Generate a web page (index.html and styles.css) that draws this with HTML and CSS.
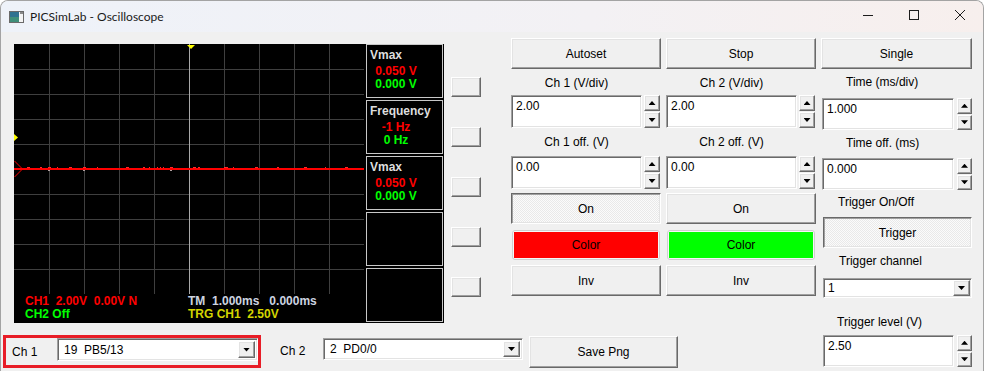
FILE: index.html
```html
<!DOCTYPE html>
<html lang="en">
<head>
    <meta charset="UTF-8">
    <title>PICSimLab - Oscilloscope</title>
    <link rel="stylesheet" href="styles.css">
</head>
<body>
<div class="window">
    <div class="titlebar">
        <svg class="app-icon" width="15" height="12" viewBox="0 0 15 12">
            <rect x="0.5" y="0.5" width="14" height="11" fill="#f4f4f4" stroke="#6a6a6a"/>
            <rect x="1" y="1" width="9" height="10" fill="#2f7290"/>
            <rect x="1" y="6" width="9" height="5" fill="#3f8f7a"/>
            <rect x="11" y="1" width="3" height="2" fill="#8a8a8a"/>
        </svg>
        <span class="title">PICSimLab - Oscilloscope</span>
        <div class="caption">
            <span class="cap"><svg width="10" height="10"><path d="M0 5.5H10" stroke="#1c1c1c"/></svg></span>
            <span class="cap"><svg width="10" height="10"><rect x="0.5" y="0.5" width="9" height="9" fill="none" stroke="#1c1c1c"/></svg></span>
            <span class="cap"><svg width="10" height="10"><path d="M0 0L10 10M10 0L0 10" stroke="#1c1c1c"/></svg></span>
        </div>
    </div>

    <div class="content">
        <div class="left">
            <div class="top">
                <div class="scope">
                    <div class="screen">
                        <svg class="grid" width="350" height="250" viewBox="0 0 350 250">
                            <path d="M35.5 0V250M70.5 0V250M105.5 0V250M140.5 0V250M210.5 0V250M245.5 0V250M280.5 0V250M315.5 0V250" stroke="#3f3f3f"/>
                            <path d="M0 25.5H350M0 50.5H350M0 75.5H350M0 100.5H350M0 150.5H350M0 175.5H350M0 200.5H350M0 225.5H350" stroke="#3f3f3f"/>
                            <path d="M175.5 0V250" stroke="#a8a8a8"/>
                            <rect x="0" y="124" width="350" height="2" fill="#ff0000"/>
                            <g fill="#ff2a2a">
                                <rect x="13" y="123" width="3" height="1"/>
                                <rect x="26" y="123" width="2" height="1"/>
                                <rect x="34" y="123" width="3" height="1"/>
                                <rect x="43" y="123" width="1" height="1"/>
                                <rect x="55" y="123" width="3" height="1"/>
                                <rect x="69" y="123" width="3" height="1"/>
                                <rect x="83" y="123" width="1" height="1"/>
                                <rect x="112" y="123" width="3" height="1"/>
                                <rect x="129" y="123" width="2" height="1"/>
                                <rect x="135" y="123" width="1" height="1"/>
                                <rect x="143" y="123" width="1" height="1"/>
                                <rect x="146" y="123" width="1" height="1"/>
                                <rect x="149" y="123" width="1" height="1"/>
                                <rect x="156" y="123" width="3" height="1"/>
                                <rect x="179" y="123" width="3" height="1"/>
                                <rect x="184" y="123" width="2" height="1"/>
                                <rect x="210" y="123" width="4" height="1"/>
                                <rect x="219" y="123" width="1" height="1"/>
                                <rect x="241" y="123" width="3" height="1"/>
                                <rect x="263" y="123" width="2" height="1"/>
                                <rect x="290" y="123" width="3" height="1"/>
                                <rect x="311" y="123" width="1" height="1"/>
                                <rect x="331" y="123" width="3" height="1"/>
                            </g>
                            <g fill="#b0a0a0">
                                <rect x="34" y="126" width="2" height="1"/>
                                <rect x="69" y="126" width="2" height="1"/>
                                <rect x="156" y="126" width="2" height="1"/>
                            </g>
                            <polygon points="173,1 181,1 177,5" fill="#ffff00"/>
                            <polygon points="0,90 4,93.5 0,97" fill="#ffff00"/>
                            <polyline points="0.5,117 8.5,125 0.5,133" fill="none" stroke="#ff0000"/>
                        </svg>
                        <div class="readout">
                            <div class="rcol first">
                                <div class="rline red">CH1  2.00V  0.00V N</div>
                                <div class="rline green">CH2 Off</div>
                            </div>
                            <div class="rcol">
                                <div class="rline grey">TM  1.000ms   0.000ms</div>
                                <div class="rline yellow">TRG CH1  2.50V</div>
                            </div>
                        </div>
                    </div>
                    <div class="meas">
                        <div class="mbox">
                            <div class="mname">Vmax</div>
                            <div class="vals"><div class="red">0.050 V</div><div class="green">0.000 V</div></div>
                        </div>
                        <div class="mbox">
                            <div class="mname">Frequency</div>
                            <div class="vals"><div class="red">-1 Hz</div><div class="green">0 Hz</div></div>
                        </div>
                        <div class="mbox">
                            <div class="mname">Vmax</div>
                            <div class="vals"><div class="red">0.050 V</div><div class="green">0.000 V</div></div>
                        </div>
                        <div class="mbox"></div>
                        <div class="mbox"></div>
                    </div>
                </div>

                <div class="sidebtns">
                    <button class="btn"></button>
                    <button class="btn"></button>
                    <button class="btn"></button>
                    <button class="btn"></button>
                    <button class="btn"></button>
                </div>

                <div class="chcol">
                    <button class="btn big">Autoset</button>
                    <div class="lbl lbl-a">Ch 1 (V/div)</div>
                    <div class="field-row">
                        <div class="field">2.00</div>
                        <div class="spin"><button class="sb up"></button><button class="sb dn"></button></div>
                    </div>
                    <div class="lbl lbl-b">Ch 1 off. (V)</div>
                    <div class="field-row">
                        <div class="field">0.00</div>
                        <div class="spin"><button class="sb up"></button><button class="sb dn"></button></div>
                    </div>
                    <button class="btn big down on">On</button>
                    <button class="colorbtn"><span class="swatch red-bg">Color</span></button>
                    <button class="btn big inv">Inv</button>
                </div>

                <div class="chcol">
                    <button class="btn big">Stop</button>
                    <div class="lbl lbl-a">Ch 2 (V/div)</div>
                    <div class="field-row">
                        <div class="field">2.00</div>
                        <div class="spin"><button class="sb up"></button><button class="sb dn"></button></div>
                    </div>
                    <div class="lbl lbl-b">Ch 2 off. (V)</div>
                    <div class="field-row">
                        <div class="field">0.00</div>
                        <div class="spin"><button class="sb up"></button><button class="sb dn"></button></div>
                    </div>
                    <button class="btn big on">On</button>
                    <button class="colorbtn"><span class="swatch green-bg">Color</span></button>
                    <button class="btn big inv">Inv</button>
                </div>
            </div>

            <div class="bottom">
                <div class="chsel">
                    <span class="chname">Ch 1</span>
                    <div class="combo wide"><span class="ctext">19  PB5/13</span><span class="drop"></span></div>
                </div>
                <span class="chname ch2">Ch 2</span>
                <div class="combo ch2sel"><span class="ctext">2  PD0/0</span><span class="drop"></span></div>
                <button class="btn save">Save Png</button>
            </div>
        </div>

        <div class="tcol">
            <button class="btn big">Single</button>
            <div class="tl tl1">Time (ms/div)</div>
            <div class="field-row trow">
                <div class="field">1.000</div>
                <div class="spin"><button class="sb up"></button><button class="sb dn"></button></div>
            </div>
            <div class="tl tl2">Time off. (ms)</div>
            <div class="field-row trow">
                <div class="field">0.000</div>
                <div class="spin"><button class="sb up"></button><button class="sb dn"></button></div>
            </div>
            <div class="tl tl3">Trigger On/Off</div>
            <button class="btn big down trig">Trigger</button>
            <div class="tl tl4">Trigger channel</div>
            <div class="combo tsel"><span class="ctext">1</span><span class="drop"></span></div>
            <div class="tl tl5">Trigger level (V)</div>
            <div class="field-row trow lvl">
                <div class="field">2.50</div>
                <div class="spin"><button class="sb up"></button><button class="sb dn"></button></div>
            </div>
        </div>
    </div>
</div>
</body>
</html>
```

FILE: styles.css
```css
* {
    box-sizing: border-box;
}
body {
    margin: 0;
    background: #ffffff;
    font-family: "Liberation Sans", Arial, sans-serif;
    font-size: 12px;
    color: #000;
    overflow: hidden;
}
.window {
    width: 984px;
    height: 371px;
    border: 1px solid #a3a3a3;
    border-bottom: 0;
    border-radius: 8px 8px 0 0;
    background: #f0f0f0;
    overflow: hidden;
}

/* title bar */
.titlebar {
    height: 31px;
    display: flex;
    align-items: center;
    background: linear-gradient(90deg, #eef2f9, #f3f1f4 60%, #f7efed);
}
.app-icon {
    margin-left: 8px;
    flex: none;
}
.title {
    margin-left: 6px;
    font-family: Lato, "Liberation Sans", sans-serif;
    font-size: 12px;
    color: #1a1a1a;
}
.caption {
    margin-left: auto;
    display: flex;
    height: 31px;
}
.cap {
    width: 46px;
    display: flex;
    justify-content: center;
    padding-top: 9px;
}

/* layout */
.content {
    display: flex;
    padding: 6px 0 0 2px;
}
.left {
    width: 813px;
}
.top {
    display: flex;
    align-items: flex-start;
    height: 297px;
}

/* scope */
.scope {
    margin: 6px 0 0 11px;
    width: 430px;
    height: 279px;
    background: #000;
    display: flex;
}
.screen {
    width: 350px;
    margin-right: 2px;
}
.grid {
    display: block;
}
.readout {
    display: flex;
    font-weight: bold;
    line-height: 13px;
    padding-top: 1px;
}
.rline {
    white-space: pre;
}
.rcol.first {
    width: 174px;
    padding-left: 11px;
}
.red { color: #ff0000; }
.green { color: #00ff00; }
.grey { color: #cdd4e0; }
.yellow { color: #d4d400; }
.meas {
    width: 77px;
    display: flex;
    flex-direction: column;
    gap: 2px;
}
.mbox {
    height: 54px;
    border: 1px solid #c8c8c8;
    padding: 4px 0 0 3px;
    font-weight: bold;
    line-height: 13px;
}
.mname {
    color: #dedede;
}
.vals {
    margin-top: 3px;
    width: 52px;
    text-align: center;
    white-space: nowrap;
}

/* classic controls */
button {
    font: inherit;
    color: #000;
    padding: 0;
    margin: 0;
}
.btn {
    display: block;
    background: #f0f0f0;
    border: 1px solid;
    border-color: #fff #696969 #696969 #fff;
    box-shadow: inset -1px -1px #a0a0a0, inset 1px 1px #e3e3e3;
}
.btn.down {
    border-color: #696969 #fff #fff #696969;
    box-shadow: inset 1px 1px #a0a0a0, inset -1px -1px #e3e3e3;
    background: repeating-conic-gradient(#fbfbfb 0 25%, #e9e9e9 0 50%) 0 0 / 2px 2px;
}
.big {
    width: 150px;
    height: 31px;
}
.sidebtns {
    margin: 39px 0 0 7px;
    display: flex;
    flex-direction: column;
    gap: 30px;
}
.sidebtns .btn {
    width: 30px;
    height: 20px;
}
.chcol {
    width: 150px;
    margin-left: 30px;
}
.chcol + .chcol {
    margin-left: 5px;
}
.lbl {
    width: 131px;
    text-align: center;
    line-height: 14px;
    white-space: nowrap;
    padding-top: 7px;
}
.lbl-a { height: 26px; }
.lbl-b { height: 28px; }
.field-row {
    display: flex;
    gap: 2px;
}
.field {
    width: 131px;
    height: 33px;
    background: #fff;
    border: 1px solid;
    border-color: #a0a0a0 #fff #fff #a0a0a0;
    box-shadow: inset 1px 1px #696969, inset -1px -1px #e3e3e3;
    padding: 3px 4px;
    line-height: 14px;
}
.spin {
    width: 16px;
    display: flex;
    flex-direction: column;
    gap: 1px;
}
.sb {
    flex: 1;
    display: flex;
    align-items: center;
    justify-content: center;
    background: #f0f0f0;
    border: 1px solid;
    border-color: #fff #696969 #696969 #fff;
    box-shadow: inset -1px -1px #a0a0a0, inset 1px 1px #e3e3e3;
}
.sb::after, .drop::after {
    content: "";
    width: 7px;
    height: 4px;
    background: #000;
}
.sb.up::after {
    clip-path: polygon(50% 0, 100% 100%, 0 100%);
}
.sb.dn::after, .drop::after {
    clip-path: polygon(0 0, 100% 0, 50% 100%);
}
.on {
    margin-top: 4px;
}
.colorbtn {
    display: block;
    width: 148px;
    height: 30px;
    margin: 6px 0 0 1px;
    padding: 1px;
    border: 1px solid #cfcfcf;
    border-radius: 3px;
    background: #f6f6f6;
}
.swatch {
    display: flex;
    height: 100%;
    align-items: center;
    justify-content: center;
}
.red-bg { background: #ff0000; }
.green-bg { background: #00ff00; }
.inv {
    margin-top: 5px;
}

/* combos */
.combo {
    display: flex;
    align-items: stretch;
    background: #fff;
    border: 1px solid;
    border-color: #a0a0a0 #fff #fff #a0a0a0;
    box-shadow: inset 1px 1px #696969, inset -1px -1px #e3e3e3;
    padding: 2px 2px 2px 0;
}
.ctext {
    flex: 1;
    padding-left: 6px;
    white-space: pre;
    display: flex;
    align-items: center;
}
.drop {
    width: 17px;
    display: flex;
    align-items: center;
    justify-content: center;
    background: #f0f0f0;
    border: 1px solid;
    border-color: #fff #696969 #696969 #fff;
    box-shadow: inset -1px -1px #a0a0a0, inset 1px 1px #e3e3e3;
}

/* bottom row */
.bottom {
    display: flex;
    align-items: flex-start;
}
.chsel {
    width: 258px;
    height: 33px;
    border: 3px solid #e81d27;
    display: flex;
    align-items: center;
}
.chname {
    padding-left: 6px;
}
.combo.wide {
    margin-left: auto;
    align-self: flex-start;
    width: 201px;
    height: 23px;
}
.chname.ch2 {
    width: 62px;
    height: 33px;
    line-height: 33px;
    padding-left: 19px;
}
.ch2sel {
    width: 200px;
    height: 22px;
    margin-top: 3px;
}
.btn.save {
    width: 149px;
    height: 32px;
    margin: 1px 0 0 6px;
}

/* right column */
.tcol {
    width: 151px;
    margin-left: 5px;
}
.tcol .big {
    width: 151px;
}
.tl {
    line-height: 14px;
    white-space: nowrap;
}
.tl1 { height: 29px; padding: 6px 0 0 25px; }
.tl2 { height: 28px; padding: 6px 0 0 25px; }
.tl3 { height: 27px; padding: 5px 0 0 17px; }
.tl4 { height: 30px; padding: 6px 0 0 18px; }
.tl5 { height: 37px; padding: 17px 0 0 16px; }
.trow {
    margin-left: 1px;
    gap: 3px;
}
.trow .field {
    width: 132px;
    height: 32px;
}
.trow .spin {
    width: 15px;
}
.trow.lvl {
    margin-left: 2px;
}
.btn.trig {
    width: 149px;
    margin-left: 2px;
}
.tsel {
    width: 149px;
    height: 20px;
    margin-left: 2px;
    padding: 1px 1px 1px 0;
}
.tsel .ctext {
    padding-left: 4px;
}
```
